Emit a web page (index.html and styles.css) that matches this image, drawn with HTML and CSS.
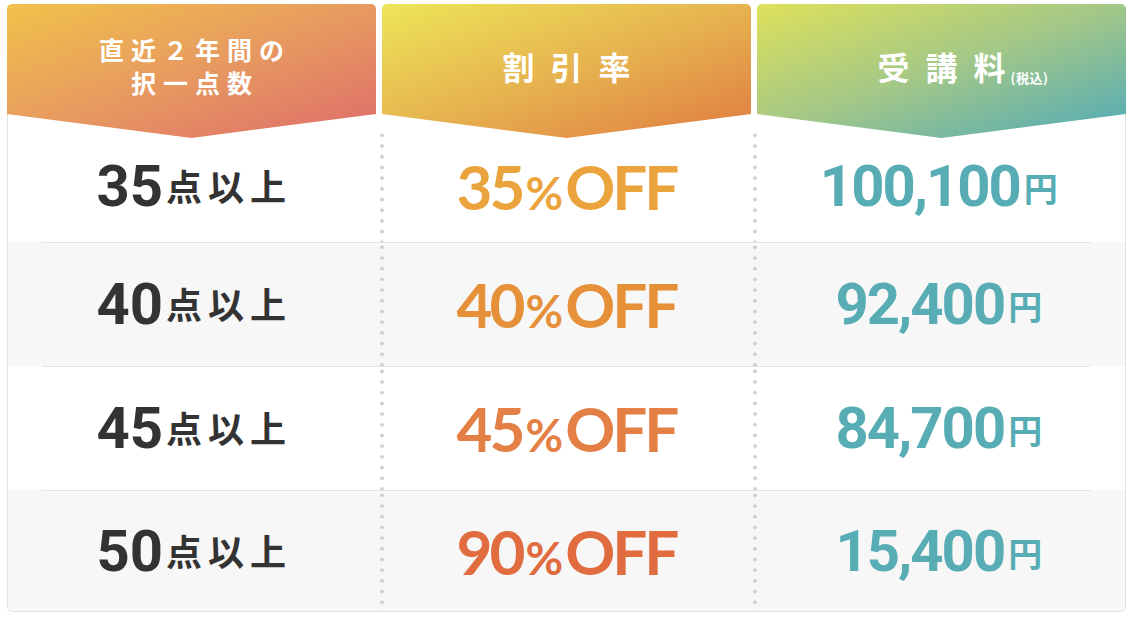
FILE: index.html
```html
<!DOCTYPE html>
<html lang="ja">
<head>
<meta charset="utf-8">
<title>受講料割引</title>
<link rel="stylesheet" href="styles.css">
</head>
<body>
<div class="price-table">
  <div class="heads">
    <div class="head head-score"><p class="head-title head-title--small">直近２年間の<br>択一点数</p></div>
    <div class="head head-rate"><p class="head-title">割引率</p></div>
    <div class="head head-fee"><p class="head-title head-title--fee"><span class="fee-label">受講<span class="last-char">料</span><span class="tax">(税込)</span></span></p></div>
  </div>
  <div class="table-body">
    <div class="row row--first">
      <div class="cell"><span class="line"><span class="num">35</span><span class="unit">点以上</span></span></div>
      <div class="cell cell--dots"><span class="line rate rate-1">35<span class="pct">%</span>OFF</span></div>
      <div class="cell cell--dots"><span class="line fee">100,100<span class="yen">円</span></span></div>
    </div>
    <div class="row row--alt">
      <div class="cell"><span class="line"><span class="num">40</span><span class="unit">点以上</span></span></div>
      <div class="cell cell--dots"><span class="line rate rate-2">40<span class="pct">%</span>OFF</span></div>
      <div class="cell cell--dots"><span class="line fee">92,400<span class="yen">円</span></span></div>
    </div>
    <div class="row">
      <div class="cell"><span class="line"><span class="num">45</span><span class="unit">点以上</span></span></div>
      <div class="cell cell--dots"><span class="line rate rate-3">45<span class="pct">%</span>OFF</span></div>
      <div class="cell cell--dots"><span class="line fee">84,700<span class="yen">円</span></span></div>
    </div>
    <div class="row row--alt row--last">
      <div class="cell"><span class="line"><span class="num">50</span><span class="unit">点以上</span></span></div>
      <div class="cell cell--dots"><span class="line rate rate-4">90<span class="pct">%</span>OFF</span></div>
      <div class="cell cell--dots"><span class="line fee">15,400<span class="yen">円</span></span></div>
    </div>
  </div>
</div>
</body>
</html>
```
FILE: styles.css
```css
html, body {
  margin: 0;
  padding: 0;
  background: #ffffff;
}

body {
  font-family: "Noto Sans CJK JP", "Noto Sans", sans-serif;
}

.price-table {
  width: 1119px;
  margin: 4px 0 0 7px;
}

.heads {
  display: grid;
  grid-template-columns: repeat(3, 1fr);
  gap: 6px;
  position: relative;
  z-index: 1;
}

.head {
  height: 134px;
  box-sizing: border-box;
  padding-bottom: 10px;
  border-radius: 5px 5px 0 0;
  clip-path: polygon(0 0, 100% 0, 100% 110px, 50% 134px, 0 110px);
  display: flex;
  align-items: center;
  justify-content: center;
  color: #ffffff;
}

.head-score {
  background: linear-gradient(to bottom right, #f1c24a 0%, #e79a60 50%, #de6d6a 100%);
}

.head-rate {
  background: linear-gradient(to bottom right, #ede558 0%, #e6b34f 50%, #e07b41 100%);
}

.head-fee {
  background: linear-gradient(to bottom right, #dee15a 0%, #a2c788 50%, #4faab9 100%);
}

.head-title {
  margin: 0;
  font-weight: 700;
  font-size: 32px;
  line-height: 1;
  letter-spacing: 16px;
  padding-left: 16px;
  text-align: center;
}

.head-title--small {
  font-size: 25px;
  line-height: 33px;
  letter-spacing: 7px;
  padding-left: 7px;
}

.head-title--fee {
  padding-left: 0;
}

.fee-label {
  position: relative;
}

.last-char {
  letter-spacing: 0;
}

.tax {
  position: absolute;
  left: 100%;
  bottom: 5px;
  margin-left: 5px;
  font-size: 13px;
  letter-spacing: 0.5px;
  line-height: 1;
  white-space: nowrap;
}

.table-body {
  margin-top: -24px;
  border: 1px solid #e3e3e3;
  border-top: none;
  border-radius: 0 0 5px 5px;
  overflow: hidden;
}

.row {
  display: grid;
  grid-template-columns: repeat(3, 1fr);
  height: 124px;
  box-sizing: border-box;
  background: linear-gradient(#e4e4e4, #e4e4e4) no-repeat 34px 0 / calc(100% - 68px) 1px, #ffffff;
}

.row--alt {
  background: linear-gradient(#e4e4e4, #e4e4e4) no-repeat 34px 0 / calc(100% - 68px) 1px, #f7f7f7;
}

.row--first {
  height: 128px;
  padding-top: 16px;
  background: #ffffff;
}

.row--last {
  height: 121px;
}

.cell {
  display: flex;
  align-items: center;
  justify-content: center;
}

.cell--dots {
  background: radial-gradient(circle at 2px 50%, #cfcfcf 1.5px, rgba(207, 207, 207, 0) 2.2px) 0 0 / 5px 10.7px repeat-y;
}

.line {
  white-space: nowrap;
  line-height: 1;
}

.num {
  font-family: Roboto, "Liberation Sans", sans-serif;
  font-weight: 700;
  font-size: 58px;
  color: #333333;
}

.unit {
  font-family: "Noto Sans CJK JP", sans-serif;
  font-weight: 700;
  font-size: 36px;
  letter-spacing: 6px;
  color: #333333;
  margin-left: 3px;
  vertical-align: 5px;
}

.rate {
  font-family: Lato, "Liberation Sans", sans-serif;
  font-weight: 700;
  font-size: 62px;
  letter-spacing: -3px;
}

.pct {
  font-size: 46px;
  letter-spacing: 0;
  margin: 0 2px 0 3px;
}

.rate-1 { color: #eba43d; }
.rate-2 { color: #e6913a; }
.rate-3 { color: #e47f45; }
.rate-4 { color: #e06c40; }

.fee {
  font-family: Roboto, "Liberation Sans", sans-serif;
  font-weight: 700;
  font-size: 58px;
  letter-spacing: -2px;
  color: #58adb5;
}

.yen {
  font-family: "Noto Sans CJK JP", sans-serif;
  font-size: 34px;
  letter-spacing: 0;
  margin-left: 4px;
  vertical-align: 4px;
}
```
